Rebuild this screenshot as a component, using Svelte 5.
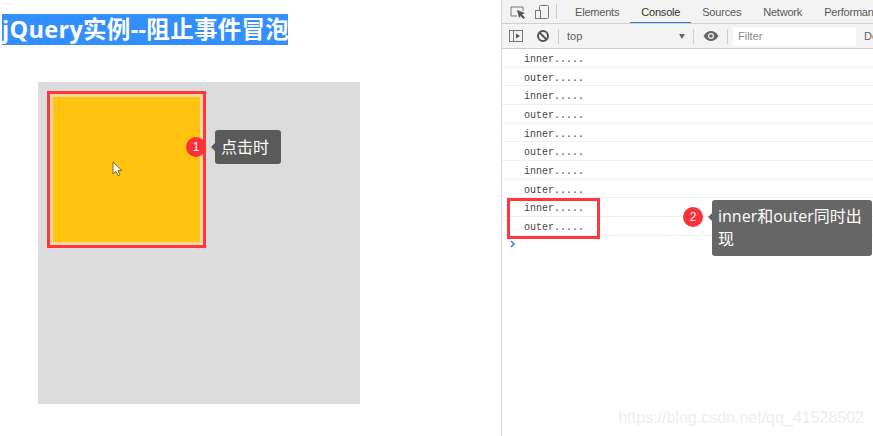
<script lang="ts">
	const tabs = ['Elements', 'Console', 'Sources', 'Network', 'Performance'];
	const logs = ['inner', 'outer', 'inner', 'outer', 'inner', 'outer', 'inner', 'outer', 'inner', 'outer'];
</script>

<div class="page">
	<section class="demo">
		<h1><span class="selected">jQuery实例--阻止事件冒泡</span></h1>
		<div class="outer">
			<div class="frame">
				<div class="inner">
					<svg class="cursor" width="11" height="16" viewBox="0 0 11 16">
						<path d="M1 1v12l3-2.6 2 4.4 2-.9-2-4.3h4z" fill="#fff" stroke="#8a6a1c" stroke-width="1"/>
					</svg>
				</div>
			</div>
		</div>
	</section>

	<section class="devtools">
		<div class="tabbar">
			<svg class="tool" width="18" height="18" viewBox="0 0 18 18" fill="none">
				<path d="M7 13H1V4h12v4" stroke="#777" stroke-width="1"/>
				<path d="M7 7l8 3-3 1.500 3 3-1.500 1.500-3-3L9 15z" fill="#555"/>
			</svg>
			<svg class="tool" width="16" height="18" viewBox="0 0 16 18" fill="none">
				<rect x="5.500" y="2.500" width="9" height="13" rx="1" stroke="#777"/>
				<rect x="1.500" y="7.500" width="5" height="8" fill="#f3f3f3" stroke="#777"/>
			</svg>
			<i class="sep"></i>
			<nav>
				{#each tabs as tab}
					<span class="tab" class:active={tab === 'Console'}>{tab}</span>
				{/each}
			</nav>
		</div>
		<div class="toolbar">
			<svg class="side" width="16" height="14" viewBox="0 0 16 14" fill="none">
				<rect x="1.500" y="1.500" width="13" height="11" stroke="#777"/>
				<path d="M5.500 1.500v11" stroke="#777"/>
				<path d="M8 4.500l4 2.500-4 2.500z" fill="#555"/>
			</svg>
			<svg class="clear" width="14" height="14" viewBox="0 0 14 14" fill="none">
				<circle cx="7" cy="7" r="5" stroke="#555" stroke-width="2"/>
				<path d="M3.500 3.500l7 7" stroke="#555" stroke-width="2"/>
			</svg>
			<i class="sep"></i>
			<div class="context">top<span class="caret"></span></div>
			<i class="sep"></i>
			<svg class="eye" width="16" height="12" viewBox="0 0 16 12">
				<path d="M0.500 6C3 2 5.500 1 8 1s5 1 7.500 5C13 10 10.500 11 8 11S3 10 .5 6z" fill="#666"/>
				<circle cx="8" cy="6" r="3" fill="#eee"/>
				<circle cx="8" cy="6" r="1.800" fill="#666"/>
			</svg>
			<i class="sep"></i>
			<div class="filter">Filter</div>
			<span class="levels">De</span>
		</div>
		<div class="log">
			{#each logs as entry}
				<div class="row">{entry}.....</div>
			{/each}
			<div class="prompt">
				<svg width="6" height="8" viewBox="0 0 6 8" fill="none">
					<path d="M1 1l3 3-3 3" stroke="#3f78d8" stroke-width="1.500"/>
				</svg>
			</div>
		</div>
		<div class="watermark">https://blog.csdn.net/qq_41528502</div>
	</section>

	<!-- annotations sit over the screenshot -->
	<div class="mark-box"></div>
	<span class="badge first">1</span>
	<div class="tip first">点击时</div>
	<span class="badge second">2</span>
	<div class="tip second">inner和outer同时出现</div>
</div>

<style>
	:global(body) {
		margin: 0;
		background: #fff;
	}

	.page {
		position: relative;
		display: flex;
		width: 873px;
		height: 436px;
		overflow: hidden;
		font-family: "Liberation Sans", "Noto Sans CJK SC", sans-serif;
	}

	.demo {
		box-sizing: border-box;
		flex: none;
		width: 502px;
		padding-top: 14px;
		border-right: 1px solid #d8d8d8;
	}

	h1 {
		margin: 0 0 37px 2px;
		font-family: "Open Sans", "Noto Sans CJK SC", sans-serif;
		font-size: 23.500px;
		line-height: 31px;
		font-weight: 700;
		white-space: nowrap;
	}

	.selected {
		display: block;
		width: 286px;
		background: #338fff;
		color: #fff;
		letter-spacing: 0.3px;
	}

	.outer {
		box-sizing: border-box;
		width: 322px;
		height: 322px;
		margin-left: 38px;
		padding: 9px;
		background: #dcdcdc;
	}

	.frame {
		box-sizing: border-box;
		width: 159px;
		height: 157px;
		padding: 3px;
		border: 3px solid #ff383f;
		background: #f0d9a0;
	}

	.inner {
		position: relative;
		width: 147px;
		height: 145px;
		background: #ffc310;
	}

	.cursor {
		position: absolute;
		left: 59px;
		top: 64px;
	}

	.devtools {
		position: relative;
		flex: 1;
		min-width: 0;
	}

	.tabbar {
		display: flex;
		align-items: center;
		box-sizing: border-box;
		height: 24px;
		padding-left: 8px;
		background: #f3f3f3;
		border-bottom: 1px solid #d0d0d0;
		white-space: nowrap;
		overflow: hidden;
	}

	.tool {
		flex: none;
		margin-right: 6px;
	}

	.sep {
		flex: none;
		width: 1px;
		height: 15px;
		background: #ccc;
	}

	nav {
		display: flex;
		flex: none;
		align-self: flex-start;
		margin-left: 7px;
	}

	.tab {
		box-sizing: border-box;
		height: 24px;
		padding: 5px 11px 0;
		font-size: 11px;
		line-height: 14px;
		letter-spacing: -0.2px;
		color: #5a5a5a;
	}

	.tab.active {
		color: #333;
		border-bottom: 2px solid #2f7bd8;
	}

	.toolbar {
		display: flex;
		align-items: center;
		box-sizing: border-box;
		height: 25px;
		padding-left: 6px;
		background: #f3f3f3;
		border-bottom: 1px solid #d0d0d0;
		font-size: 11px;
		color: #5f5f5f;
		white-space: nowrap;
		overflow: hidden;
	}

	.side,
	.clear,
	.eye {
		flex: none;
	}

	.clear {
		margin: 0 8px 0 12px;
	}

	.context {
		position: relative;
		flex: none;
		box-sizing: border-box;
		width: 134px;
		padding-left: 8px;
	}

	.caret {
		position: absolute;
		right: 8px;
		top: 4px;
		border: 3.500px solid transparent;
		border-top: 5px solid #666;
		border-bottom: 0;
	}

	.eye {
		margin: 0 8px 0 9px;
	}

	.filter {
		flex: none;
		box-sizing: border-box;
		width: 123px;
		height: 19px;
		margin: 0 8px 0 5px;
		padding: 3px 5px 0;
		background: #fff;
		color: #8a8a8a;
	}

	.row {
		box-sizing: border-box;
		height: 18.67px;
		padding: 4px 0 0 22px;
		border-bottom: 1px solid #f0f0f0;
		font-family: "Liberation Mono", monospace;
		font-size: 10px;
		line-height: 14px;
		color: #444;
	}

	.prompt {
		padding: 4px 0 0 8px;
		line-height: 8px;
	}

	.prompt svg {
		display: block;
	}

	.watermark {
		position: absolute;
		right: 9px;
		bottom: 9px;
		font-size: 16px;
		line-height: 19px;
		color: #eeeeee;
		white-space: nowrap;
	}

	.mark-box {
		position: absolute;
		left: 507px;
		top: 198px;
		width: 87px;
		height: 35px;
		border: 3px solid #ff383f;
	}

	.badge {
		position: absolute;
		width: 20px;
		height: 20px;
		border-radius: 50%;
		background: #fb3038;
		color: #fff;
		font-size: 12px;
		line-height: 20px;
		text-align: center;
	}

	.badge.first {
		left: 186px;
		top: 137px;
	}

	.badge.second {
		left: 683px;
		top: 207px;
	}

	.tip {
		position: absolute;
		box-sizing: border-box;
		background: #5a5a5a;
		color: #fff;
		font-family: "Open Sans", "Noto Sans CJK SC", sans-serif;
		font-size: 16px;
		border-radius: 3px;
	}

	.tip::before {
		content: '';
		position: absolute;
		left: -4px;
		top: 13px;
		border: 4px solid transparent;
		border-left: 0;
		border-right-color: inherit;
	}

	.tip.first {
		left: 215px;
		top: 130px;
		width: 66px;
		height: 34px;
		padding: 5px 6px;
		line-height: 24px;
		border-color: #5a5a5a;
	}

	.tip.second {
		left: 712px;
		top: 200px;
		width: 160px;
		height: 56px;
		padding: 5px 6px;
		line-height: 23px;
		background: #666;
		border-color: #666;
	}
</style>
